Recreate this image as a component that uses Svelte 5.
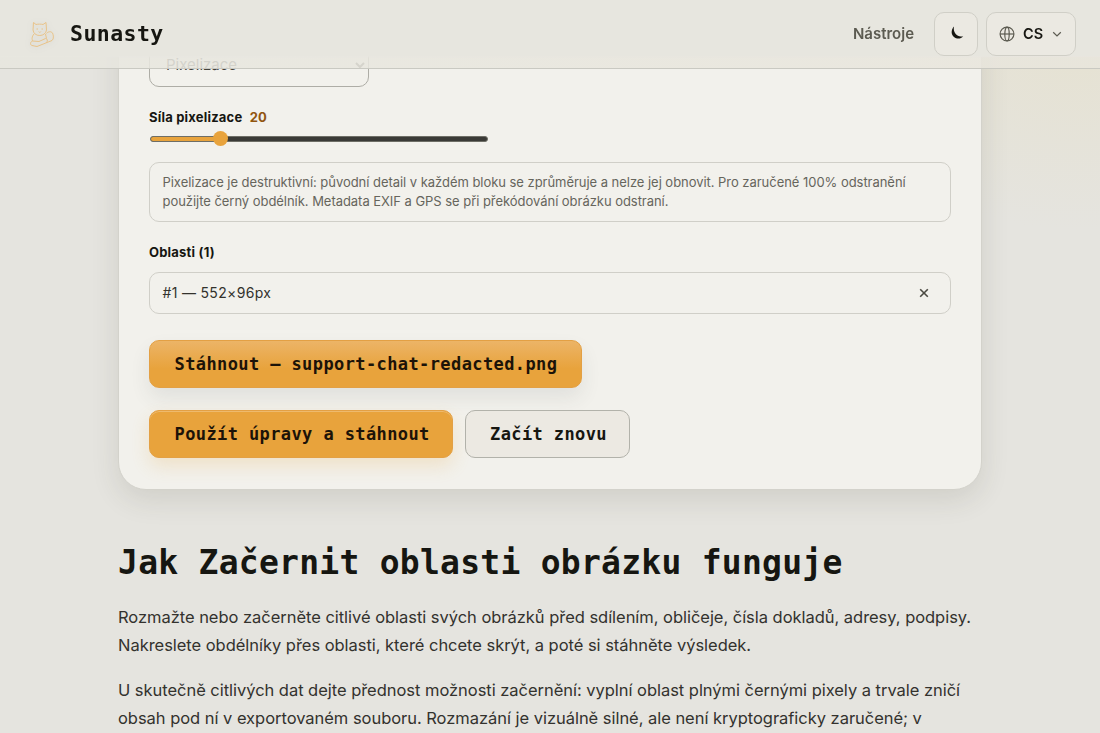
<script>
    let strength = $state(20);
    let regions = $state([{ id: 1, width: 552, height: 96 }]);
    const fileName = "support-chat-redacted.png";

    // slider goes from 4 to 80
    let percent = $derived(((strength - 4) / 76) * 100);

    function removeRegion(id) {
        regions = regions.filter((r) => r.id !== id);
    }
</script>

<div class="page">
    <header>
        <div class="brand">
            <svg class="logo" viewBox="0 0 28 30" width="28" height="30" fill="none">
                <path d="M5 11 L5.500 3.500 L8 5.500 C10 5 13 5 15 5.500 L18 3.500 L18.500 11 C18 14.500 15 16.500 11.800 16.500 C8 16.500 5.500 14.500 5 11Z" />
                <path d="M6 15 C3.500 18 4 20 4.500 22 C2 23 2 26 4 26.500 L9 27.500 L24 21.500 C26 20 25.500 16 24.500 14 C23 12 20 12.500 18.500 14.500" />
                <path d="M4.500 22 L11 22.500 L17.500 19.500 C19.500 19.500 20 22 18.500 23.500 M17.500 15 L18.500 19.500" />
                <path d="M8.500 10 h1.500 M13.500 10 h1.500 M10.800 12.500 l1 1 l1 -1" />
            </svg>
            <span class="name">Sunasty</span>
        </div>
        <nav>
            <a href="#tools">Nástroje</a>
            <button class="theme" aria-label="Motiv">
                <svg viewBox="0 0 16 16" width="16" height="16">
                    <path d="M5 1.500 C1.800 5 2 9.500 5 12 C8 14.500 12 14 14.200 11.200 C11 12 8.500 11.200 6.700 9 C4.900 6.800 4.400 4.300 5 1.500Z" fill="#161611" />
                </svg>
            </button>
            <button class="lang">
                <svg viewBox="0 0 16 16" width="16" height="16" fill="none" stroke="#5c5b51" stroke-width="1.2">
                    <circle cx="8" cy="8" r="6.900" />
                    <ellipse cx="8" cy="8" rx="2.200" ry="6.900" />
                    <path d="M1 8 H15" />
                </svg>
                <span>CS</span>
                <svg class="arrow" viewBox="0 0 10 10" width="10" height="10" fill="none" stroke="#5c5b51" stroke-width="1.2">
                    <path d="M1.200 3.200 L5 6.900 L8.800 3.200" />
                </svg>
            </button>
        </nav>
    </header>

    <main>
        <section class="card">
            <div class="select">
                <span>Pixelizace</span>
                <svg viewBox="0 0 10 10" width="10" height="10" fill="none" stroke="#55544b" stroke-width="2">
                    <path d="M1 3 L5 7 L9 3" />
                </svg>
            </div>

            <div class="label">Síla pixelizace <span class="value">{strength}</span></div>
            <div class="slider">
                <div class="fill" style="width: {percent}%"></div>
                <div class="thumb" style="left: {percent}%"></div>
            </div>

            <p class="note">
                Pixelizace je destruktivní: původní detail v každém bloku se zprůměruje a nelze jej obnovit. Pro zaručené 100% odstranění<br />
                použijte černý obdélník. Metadata EXIF a GPS se při překódování obrázku odstraní.
            </p>

            <div class="label">Oblasti ({regions.length})</div>
            {#each regions as region}
                <div class="region">
                    <span>#{region.id} — {region.width}×{region.height}px</span>
                    <button aria-label="Odstranit" onclick={() => removeRegion(region.id)}>
                        <svg viewBox="0 0 10 10" width="10" height="10" stroke="#4b4a42" stroke-width="1.600">
                            <path d="M1.200 1.200 L8.800 8.800 M8.800 1.200 L1.200 8.800" />
                        </svg>
                    </button>
                </div>
            {/each}

            <button class="btn download">Stáhnout — {fileName}</button>
            <div class="actions">
                <button class="btn">Použít úpravy a stáhnout</button>
                <button class="btn plain">Začít znovu</button>
            </div>
        </section>

        <article>
            <h2>Jak Začernit oblasti obrázku funguje</h2>
            <p>
                Rozmažte nebo začerněte citlivé oblasti svých obrázků před sdílením, obličeje, čísla dokladů, adresy, podpisy.<br />
                Nakreslete obdélníky přes oblasti, které chcete skrýt, a poté si stáhněte výsledek.
            </p>
            <p>
                U skutečně citlivých dat dejte přednost možnosti začernění: vyplní oblast plnými černými pixely a trvale zničí<br />
                obsah pod ní v exportovaném souboru. Rozmazání je vizuálně silné, ale není kryptograficky zaručené; v
            </p>
        </article>
    </main>
</div>

<style>
    :global(body) {
        background: #e5e4df;
    }

    .page {
        height: 733px;
        overflow: hidden;
        font-family: Inter, "Liberation Sans", sans-serif;
        color: #161611;
        background:
            radial-gradient(ellipse 260px 200px at 1080px 30px, rgba(230, 224, 200, 0.6), transparent),
            #e5e4df;
    }

    * {
        box-sizing: border-box;
    }

    button {
        font-family: inherit;
        color: inherit;
    }

    /* Header over the scrolled content */
    header {
        position: fixed;
        top: 0;
        left: 0;
        right: 0;
        z-index: 2;
        height: 69px;
        padding: 0 24px 1px 28px;
        display: flex;
        align-items: center;
        justify-content: space-between;
        background:
            linear-gradient(#e7e6df 56px, transparent 58px),
            linear-gradient(90deg, rgba(231, 230, 223, 0.88), rgba(232, 229, 220, 0.88));
        border-bottom: 1px solid #c9c9c2;
    }

    .brand {
        display: flex;
        align-items: center;
        gap: 14px;
    }

    .logo {
        stroke: #e9bf80;
        stroke-width: 0.9;
        filter: drop-shadow(0 1px 3px rgba(90, 90, 100, 0.16));
    }

    .name {
        font: bold 21.5px "DejaVu Sans Mono", monospace;
        letter-spacing: 0.45px;
    }

    nav {
        display: flex;
        align-items: center;
        gap: 8px;
    }

    nav a {
        margin-right: 12px;
        font-size: 15px;
        font-weight: 600;
        color: #5c5b51;
        text-decoration: none;
    }

    .theme,
    .lang {
        height: 44px;
        border: 1px solid #d0cfc7;
        border-radius: 10px;
        background: #ebe9e2;
        display: flex;
        align-items: center;
    }

    .theme {
        width: 44px;
        padding: 0 0 2px 1px;
        justify-content: center;
    }

    .lang {
        width: 90px;
        padding: 0 13px 0 12px;
        font-size: 14.5px;
        font-weight: 600;
    }

    .lang span {
        margin-left: 8px;
    }

    .arrow {
        margin-left: auto;
    }

    main {
        width: 864px;
        margin: 0 auto;
        display: flow-root;
    }

    .card {
        height: 510px;
        margin-top: -20px;
        padding: 62px 30px 0;
        background: #f2f1ec;
        border: 1px solid #d3d2cb;
        border-radius: 28px;
        box-shadow: 0 10px 28px rgba(60, 60, 40, 0.12);
    }

    .select {
        width: 220px;
        height: 44px;
        padding: 0 3px 0 16px;
        border: 1px solid #aeada6;
        border-radius: 10px;
        display: flex;
        align-items: center;
        justify-content: space-between;
        font-size: 15px;
        line-height: 18px;
        color: #44433d;
    }

    .label {
        margin-top: 22px;
        font-size: 13px;
        font-weight: 650;
        letter-spacing: 0.2px;
        line-height: 17px;
    }

    .value {
        margin-left: 4px;
        color: #91560f;
    }

    .slider {
        position: relative;
        width: 338px;
        height: 6px;
        margin: 10px 0 0 1px;
        border: 1px solid #6e6e66;
        border-radius: 3px;
        background: #3a3a36;
    }

    .fill {
        height: 100%;
        border-radius: 3px 0 0 3px;
        background: #e8a33c;
    }

    .thumb {
        position: absolute;
        top: -6px;
        width: 15px;
        height: 15px;
        margin-left: -9px;
        border-radius: 50%;
        background: #e8a33c;
    }

    .note {
        margin: 20px 0 0;
        padding: 10px 12.5px;
        height: 60px;
        border: 1px solid #d0cfc8;
        border-radius: 10px;
        font-size: 13px;
        letter-spacing: -0.04px;
        line-height: 19px;
        color: #66655c;
        white-space: nowrap;
    }

    .region {
        height: 42px;
        margin-top: 11px;
        padding: 0 21.5px 0 12.5px;
        border: 1px solid #d0cfc8;
        border-radius: 10px;
        display: flex;
        align-items: center;
        justify-content: space-between;
        font-size: 14px;
        line-height: 17px;
        letter-spacing: 0.32px;
        color: #33322c;
    }

    .region span {
        margin-top: -1px;
    }

    .region button {
        display: flex;
        padding: 0;
        border: none;
        background: none;
    }

    /* Buttons */
    .btn {
        height: 48px;
        padding: 0 0 0 24.5px;
        width: 304px;
        text-align: left;
        border: 1px solid #e3a044;
        border-radius: 10px;
        background: #e8a33c;
        box-shadow:
            inset 0 1px 0 rgba(255, 255, 255, 0.25),
            0 8px 18px rgba(232, 163, 60, 0.2);
        font: bold 17px "DejaVu Sans Mono", monospace;
        letter-spacing: 0.4px;
        color: #1c1308;
        white-space: nowrap;
    }

    .download {
        display: block;
        width: 433px;
        margin-top: 26px;
        background: linear-gradient(#ecb467, #e8a33c 60%);
        box-shadow: 0 10px 20px rgba(60, 70, 70, 0.09);
    }

    .actions {
        display: flex;
        gap: 12px;
        margin-top: 22px;
    }

    .plain {
        width: 165px;
        padding-left: 24px;
        background: #ece9e2;
        border-color: #b2b2aa;
        box-shadow: none;
        color: #161611;
    }

    h2 {
        margin: 51px 0 0;
        font: bold 33px/44px "DejaVu Sans Mono", monospace;
        letter-spacing: 0.26px;
        white-space: nowrap;
    }

    article p {
        margin: 18px 0 17px;
        font-size: 16.5px;
        line-height: 28px;
        letter-spacing: -0.035px;
        color: #33322e;
        white-space: nowrap;
    }

    article p + p {
        margin-top: -1px;
        padding-top: 1px;
    }
</style>
